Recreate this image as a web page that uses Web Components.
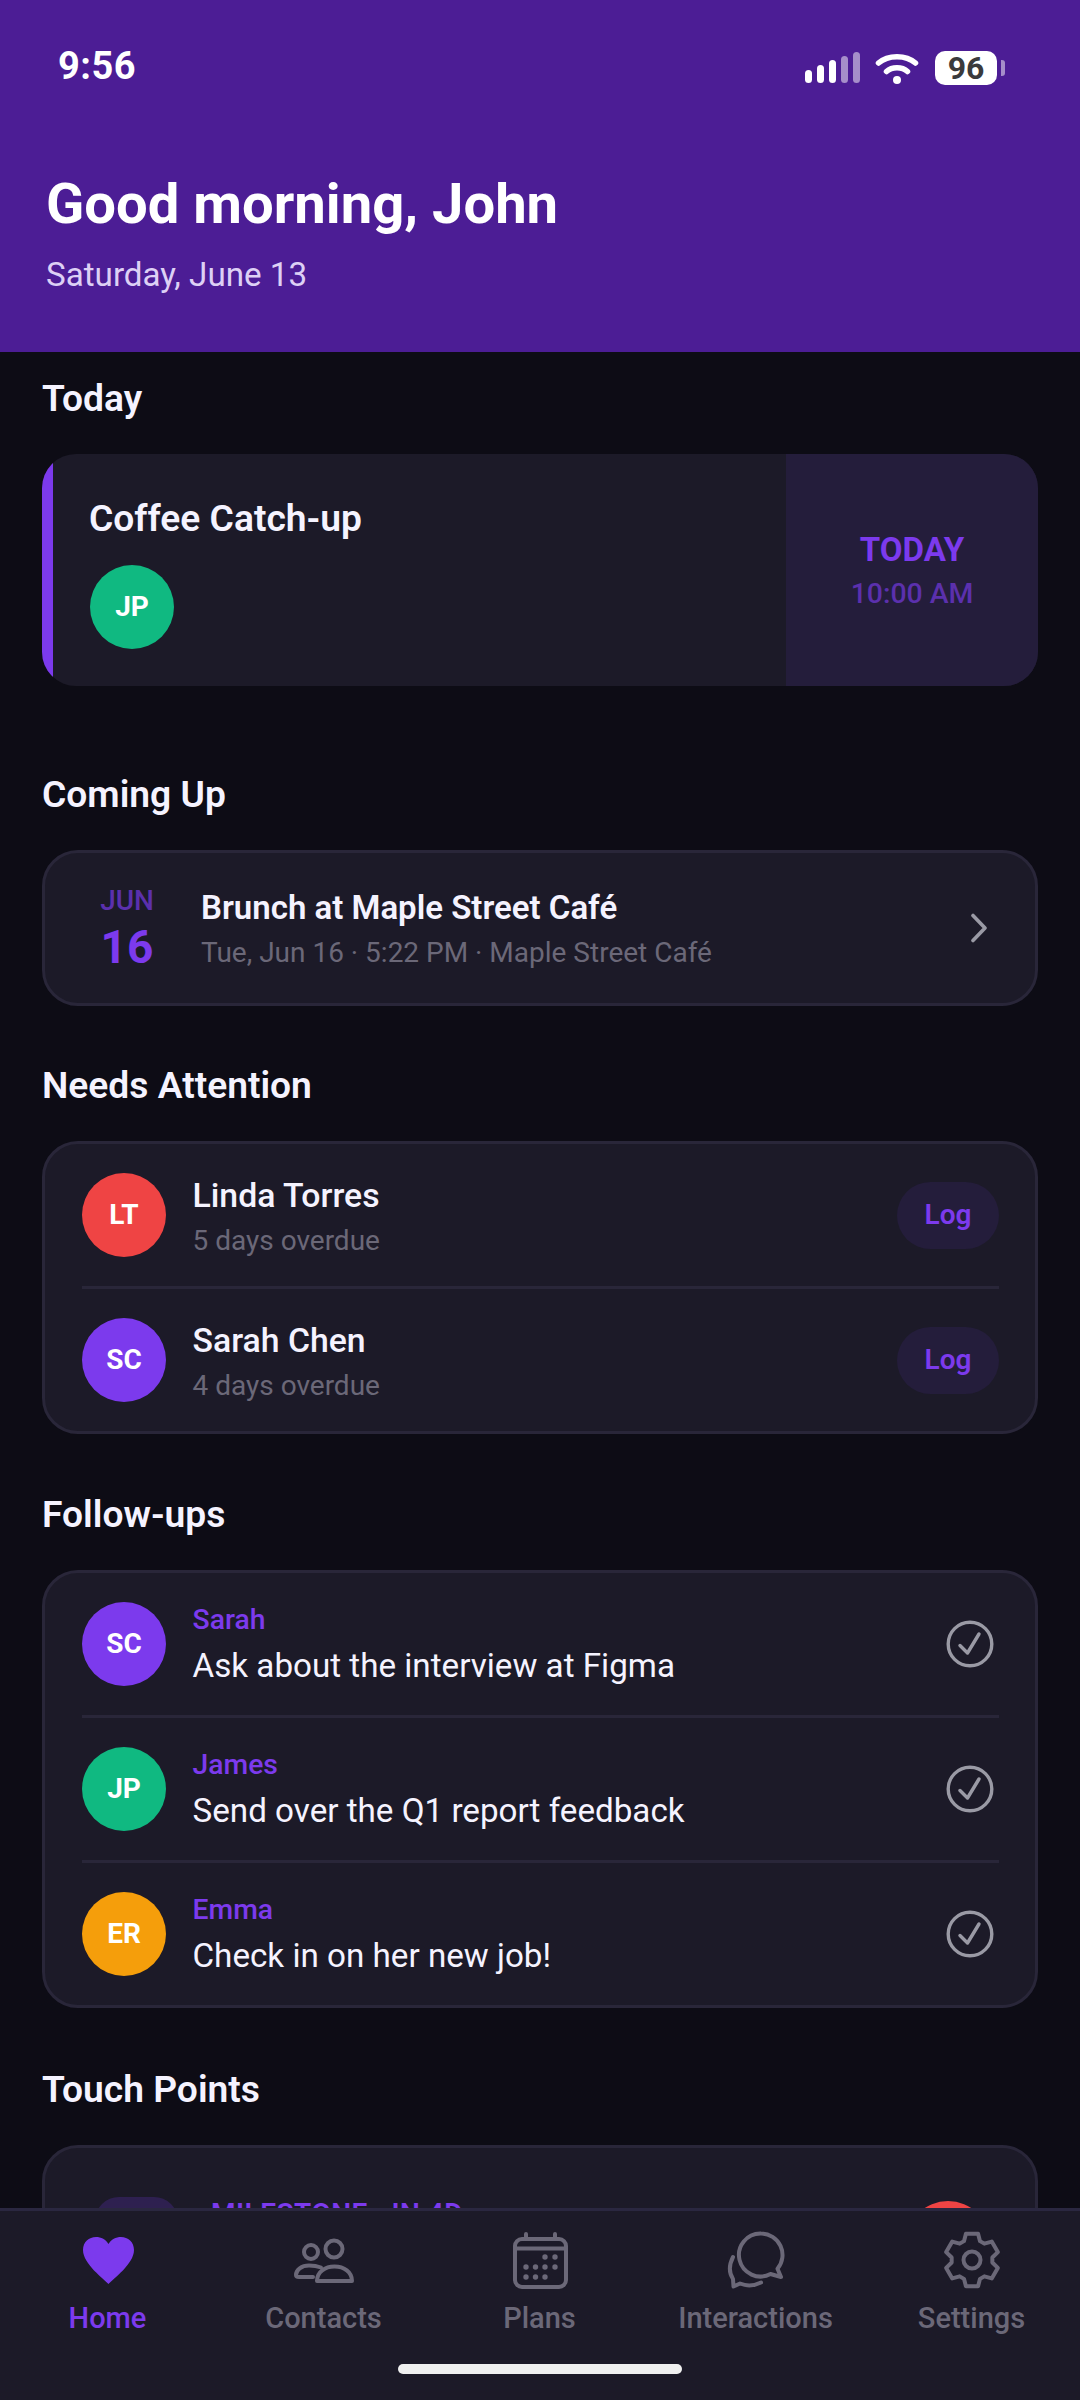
<!DOCTYPE html>
<html lang="en">
<head>
<meta charset="utf-8">
<title>Home</title>
<style>
html,body{margin:0;padding:0;background:#0d0c15;}
body{width:1080px;height:2400px;overflow:hidden;font-family:Roboto,"Liberation Sans",sans-serif;color:#fff;}
</style>
</head>
<body>
<app-shell>
  <status-bar slot="top"></status-bar>
  <app-header slot="top" title="Good morning, John" subtitle="Saturday, June 13"></app-header>

  <app-section heading="Today" class="first">
    <today-card title="Coffee Catch-up" initials="JP" color="#10b981" when="TODAY" time="10:00 AM"></today-card>
  </app-section>

  <app-section heading="Coming Up" style="--gap:86px">
    <upcoming-card month="JUN" day="16" title="Brunch at Maple Street Café" detail="Tue, Jun 16 · 5:22 PM · Maple Street Café"></upcoming-card>
  </app-section>

  <app-section heading="Needs Attention" style="--gap:57px">
    <list-card>
      <attention-row initials="LT" color="#ef4444" name="Linda Torres" detail="5 days overdue"></attention-row>
      <attention-row initials="SC" color="#7c3aed" name="Sarah Chen" detail="4 days overdue"></attention-row>
    </list-card>
  </app-section>

  <app-section heading="Follow-ups">
    <list-card>
      <followup-row initials="SC" color="#7c3aed" name="Sarah" task="Ask about the interview at Figma"></followup-row>
      <followup-row initials="JP" color="#10b981" name="James" task="Send over the Q1 report feedback"></followup-row>
      <followup-row initials="ER" color="#f59e0b" name="Emma" task="Check in on her new job!"></followup-row>
    </list-card>
  </app-section>

  <app-section heading="Touch Points" style="--gap:59px">
    <list-card>
      <touch-row label="MILESTONE · IN 4D"></touch-row>
    </list-card>
  </app-section>

  <bottom-nav slot="bottom"></bottom-nav>
</app-shell>

<script>
function shell(el, html){ el.attachShadow({mode:'open'}).innerHTML = html; }
const attr = (el,n) => el.getAttribute(n) || '';

customElements.define('app-shell', class extends HTMLElement{
  connectedCallback(){ shell(this, `<style>
    :host{display:flex;flex-direction:column;width:1080px;height:2400px;overflow:hidden;background:#0d0c15;}
    main{flex:1;min-height:0;overflow:hidden;padding:0 42px;}
  </style><slot name="top"></slot><main><slot></slot></main><slot name="bottom"></slot>`); }
});

customElements.define('status-bar', class extends HTMLElement{
  connectedCallback(){ shell(this, `<style>
    :host{display:flex;align-items:center;justify-content:space-between;height:132px;padding:0 75px 0 58px;box-sizing:border-box;background:#4c1d95;}
    .time{font:700 38px/1 Roboto,sans-serif;letter-spacing:.5px;color:#fff;}
    .right{display:flex;align-items:center;padding-top:3px;}
    svg{display:block;}
    .sig{margin-right:15px;}
    .wifi{margin-right:16px;}
    .bat{width:62px;height:34px;border-radius:10px;background:#fff;color:#3a3a3c;display:flex;align-items:center;justify-content:center;font:700 32px/1 Roboto,sans-serif;}
    .nub{width:4px;height:16px;margin-left:4px;border-radius:0 3px 3px 0;background:#fff;opacity:.5;}
  </style>
  <div class="time">9:56</div>
  <div class="right">
    <svg class="sig" width="55" height="32" viewBox="0 0 55 32" fill="#fff">
      <rect x="0" y="18" width="7" height="13" rx="3.5"/>
      <rect x="12" y="13" width="7" height="18" rx="3.5"/>
      <rect x="24" y="8" width="7" height="23" rx="3.5"/>
      <rect x="36" y="4" width="7" height="27" rx="3.5" opacity=".5"/>
      <rect x="48" y="0" width="7" height="31" rx="3.5" opacity=".5"/>
    </svg>
    <svg class="wifi" width="44" height="32" viewBox="0 0 44 32" fill="none" stroke="#fff" stroke-width="5.5" stroke-linecap="round">
      <path d="M3.5 11C13 2.5 31 2.5 40.5 11"/>
      <path d="M11.5 19.5C17 14.5 27 14.5 32.5 19.5"/>
      <circle cx="22" cy="28" r="4" fill="#fff" stroke="none"/>
    </svg>
    <div class="bat">96</div><div class="nub"></div>
  </div>`); }
});

customElements.define('app-header', class extends HTMLElement{
  connectedCallback(){ shell(this, `<style>
    :host{display:block;height:220px;padding:44px 46px 0;box-sizing:border-box;background:#4c1d95;}
    h1{margin:0;font:700 56.2px/56px Roboto,sans-serif;color:#fff;}
    p{margin:23px 0 0;font:400 33.2px/40px Roboto,sans-serif;color:#ddd0f5;}
  </style><h1>${attr(this,'title')}</h1><p>${attr(this,'subtitle')}</p>`); }
});

customElements.define('app-section', class extends HTMLElement{
  connectedCallback(){ shell(this, `<style>
    :host{display:block;margin-top:var(--gap,58px);}
    :host(.first){margin-top:24px;}
    h2{margin:0 0 34px;font:600 37.2px/44px Roboto,sans-serif;color:#f5f3ff;}
  </style><h2>${attr(this,'heading')}</h2><slot></slot>`); }
});

customElements.define('avatar-dot', class extends HTMLElement{
  connectedCallback(){ shell(this, `<style>
    :host{flex:none;display:flex;align-items:center;justify-content:center;width:84px;height:84px;border-radius:50%;background:${attr(this,'color')};color:#fff;font:700 28px/1 Roboto,sans-serif;}
  </style>${attr(this,'initials')}`); }
});

customElements.define('today-card', class extends HTMLElement{
  connectedCallback(){ shell(this, `<style>
    :host{display:flex;height:232px;border-radius:34px;overflow:hidden;background:#1c1a28;}
    .bar{flex:none;width:11px;background:#7c3aed;}
    .main{flex:1;padding:38px 36px 0;}
    .title{font:600 37.2px/52px Roboto,sans-serif;color:#f5f3ff;margin-bottom:21px;}
    .side{flex:none;width:252px;background:#241d3b;display:flex;flex-direction:column;align-items:center;justify-content:center;padding-top:2px;box-sizing:border-box;}
    .w{font:700 33px/40px Roboto,sans-serif;color:#7c3aed;}
    .t{font:500 28.4px/36px Roboto,sans-serif;color:#5b30ad;margin-top:6px;}
    avatar-dot{margin-left:1px;}
  </style><div class="bar"></div>
  <div class="main"><div class="title">${attr(this,'title')}</div><avatar-dot initials="${attr(this,'initials')}" color="${attr(this,'color')}"></avatar-dot></div>
  <div class="side"><div class="w">${attr(this,'when')}</div><div class="t">${attr(this,'time')}</div></div>`); }
});

customElements.define('upcoming-card', class extends HTMLElement{
  connectedCallback(){ shell(this, `<style>
    :host{display:flex;align-items:center;height:156px;box-sizing:border-box;border:3px solid #292639;border-radius:36px;background:#1c1a28;padding:0 47px 0 35px;}
    .date{flex:none;width:106px;margin-right:21px;margin-left:-6px;display:flex;flex-direction:column;align-items:center;}
    .m{font:500 28px/34px Roboto,sans-serif;color:#5b30ad;}
    .d{font:700 46px/50px Roboto,sans-serif;color:#7c3aed;margin-top:4px;}
    .body{flex:1;padding-top:2px;}
    .title{font:600 33px/40px Roboto,sans-serif;color:#f5f3ff;}
    .detail{font:400 28px/36px Roboto,sans-serif;color:#6b6878;margin-top:7px;}
    svg{display:block;flex:none;}
  </style>
  <div class="date"><div class="m">${attr(this,'month')}</div><div class="d">${attr(this,'day')}</div></div>
  <div class="body"><div class="title">${attr(this,'title')}</div><div class="detail">${attr(this,'detail')}</div></div>
  <svg width="18" height="30" viewBox="0 0 18 30" fill="none" stroke="#9a9aa5" stroke-width="3.6" stroke-linecap="round" stroke-linejoin="round"><path d="M3 2.5L15 15L3 27.5"/></svg>`); }
});

customElements.define('list-card', class extends HTMLElement{
  connectedCallback(){ shell(this, `<style>
    :host{display:flex;flex-direction:column;box-sizing:border-box;border:3px solid #292639;border-radius:36px;background:#1c1a28;padding:0 36px 0 37px;}
    ::slotted(*:not(:last-child)){border-bottom:3px solid #292639;}
  </style><slot></slot>`); }
});

const rowBase = `:host{display:flex;align-items:center;padding:29px 0 29px;}
  .text{flex:1;min-width:0;margin-left:26.5px;}`;

customElements.define('attention-row', class extends HTMLElement{
  connectedCallback(){ shell(this, `<style>${rowBase}
    .text{padding:3.5px 0 2.5px;}
    .name{font:500 33.8px/38px Roboto,sans-serif;color:#f5f3ff;}
    .detail{font:400 28px/28px Roboto,sans-serif;color:#6b6878;margin-top:12px;}
    .log{flex:none;width:102px;height:67px;border-radius:34px;background:#241d3b;color:#7c3aed;display:flex;align-items:center;justify-content:center;font:600 28px/1 Roboto,sans-serif;}
  </style><avatar-dot initials="${attr(this,'initials')}" color="${attr(this,'color')}"></avatar-dot>
  <div class="text"><div class="name">${attr(this,'name')}</div><div class="detail">${attr(this,'detail')}</div></div>
  <div class="log">Log</div>`); }
});

customElements.define('followup-row', class extends HTMLElement{
  connectedCallback(){ shell(this, `<style>${rowBase}
    .text{padding-top:2px;}
    .name{font:500 28.3px/32px Roboto,sans-serif;color:#7c3aed;}
    .task{font:400 33.2px/40px Roboto,sans-serif;color:#f5f3ff;margin-top:10px;}
    svg{display:block;flex:none;margin-right:5px;}
  </style><avatar-dot initials="${attr(this,'initials')}" color="${attr(this,'color')}"></avatar-dot>
  <div class="text"><div class="name">${attr(this,'name')}</div><div class="task">${attr(this,'task')}</div></div>
  <svg width="48" height="48" viewBox="0 0 48 48" fill="none" stroke="#9a9aa5" stroke-width="3.4" stroke-linecap="round" stroke-linejoin="round"><circle cx="24" cy="24" r="21.800"/><path d="M14 25.500L21.500 33L33 14"/></svg>`); }
});

customElements.define('touch-row', class extends HTMLElement{
  connectedCallback(){ shell(this, `<style>
    :host{display:flex;align-items:flex-start;padding:49px 9px 30px 13px;}
    .tile{flex:none;width:83px;height:84px;border-radius:24px;background:#2e2050;}
    .text{flex:1;margin-left:33px;font:600 28px/34px Roboto,sans-serif;letter-spacing:.5px;color:#7c3aed;}
    .dot{flex:none;width:84px;height:84px;margin-top:4px;border-radius:50%;background:#ef4444;}
  </style><div class="tile"></div><div class="text">${attr(this,'label')}</div><div class="dot"></div>`); }
});

const gear = (() => {
  const c = 32, R = 27, r = 20.5, pts = [];
  for (let k = 0; k < 6; k++) {
    const a = -90 + k * 60;
    [[r,-23],[R,-13],[R,13],[r,23]].forEach(([rad,d]) => {
      const t = (a + d) * Math.PI / 180;
      pts.push((c + rad * Math.cos(t)).toFixed(2) + ' ' + (c + rad * Math.sin(t)).toFixed(2));
    });
  }
  return 'M' + pts.join('L') + 'Z';
})();

const ICONS = {
  home: `<path fill="#7c3aed" d="M32.5 56C28 51 7 36 7 22C7 14 13 9 20 9C25 9 30 11.5 32.5 16C35 11.5 40 9 45 9C52 9 58 14 58 22C58 36 37 51 32.5 56Z"/>`,
  contacts: `<g fill="none" stroke="#6b6878" stroke-width="4" stroke-linecap="round" stroke-linejoin="round"><circle cx="19" cy="24" r="7"/><circle cx="42" cy="21" r="8.5"/><path d="M25 53C25 44 33 38.5 42.5 38.5C52 38.5 60 44 60 53Z"/><path d="M29 39.5C25 38 21 37.5 17 37.5C9.5 37.5 4 42 4 47Q4 49 7 49L21 49"/></g>`,
  plans: `<g fill="none" stroke="#6b6878" stroke-width="4" stroke-linecap="round"><rect x="7" y="11" width="51" height="48" rx="7"/><path d="M7 20.5H58M18 6V11M47 6V11"/></g><g fill="#6b6878"><circle cx="37" cy="29" r="2.7"/><circle cx="47" cy="29" r="2.7"/><circle cx="18" cy="39" r="2.7"/><circle cx="27.5" cy="39" r="2.7"/><circle cx="37" cy="39" r="2.7"/><circle cx="47" cy="39" r="2.7"/><circle cx="18" cy="49" r="2.7"/><circle cx="27.5" cy="49" r="2.7"/><circle cx="37" cy="49" r="2.7"/></g>`,
  chats: `<g fill="none" stroke="#6b6878" stroke-width="4" stroke-linecap="round" stroke-linejoin="round"><path d="M37 5.5a21.5 21.5 0 0 1 16.500 35.300L57 49L46.500 46a21.500 21.500 0 1 1 -9.500 -40.500Z"/><path d="M9 29C5 37 5 45 9 51L9.500 58.500L16 55.500C22 58 30 58 37 54.500"/></g>`,
  settings: `<g fill="none" stroke="#6b6878" stroke-width="4" stroke-linejoin="round"><path d="${gear}"/><circle cx="32" cy="32" r="8.500"/></g>`
};

customElements.define('nav-item', class extends HTMLElement{
  connectedCallback(){ const on = this.hasAttribute('active'); shell(this, `<style>
    :host{flex:1;display:flex;flex-direction:column;align-items:center;}
    svg{display:block;}
    span{display:block;margin:7.5px 0 0 -1px;font:500 29px/36px Roboto,sans-serif;color:${on?'#7c3aed':'#6b6878'};}
  </style><svg width="64" height="64" viewBox="0 0 64 64">${ICONS[attr(this,'icon')]}</svg><span>${attr(this,'label')}</span>`); }
});

customElements.define('bottom-nav', class extends HTMLElement{
  connectedCallback(){ shell(this, `<style>
    :host{display:block;height:192px;box-sizing:border-box;border-top:3px solid #2a2740;background:#1c1a28;}
    .row{display:flex;padding-top:17px;}
    .pill{width:284px;height:10px;border-radius:5px;background:#f0f0f0;margin:28.500px auto 0;}
  </style><div class="row">
    <nav-item icon="home" label="Home" active></nav-item>
    <nav-item icon="contacts" label="Contacts"></nav-item>
    <nav-item icon="plans" label="Plans"></nav-item>
    <nav-item icon="chats" label="Interactions"></nav-item>
    <nav-item icon="settings" label="Settings"></nav-item>
  </div><div class="pill"></div>`); }
});
</script>
</body>
</html>
